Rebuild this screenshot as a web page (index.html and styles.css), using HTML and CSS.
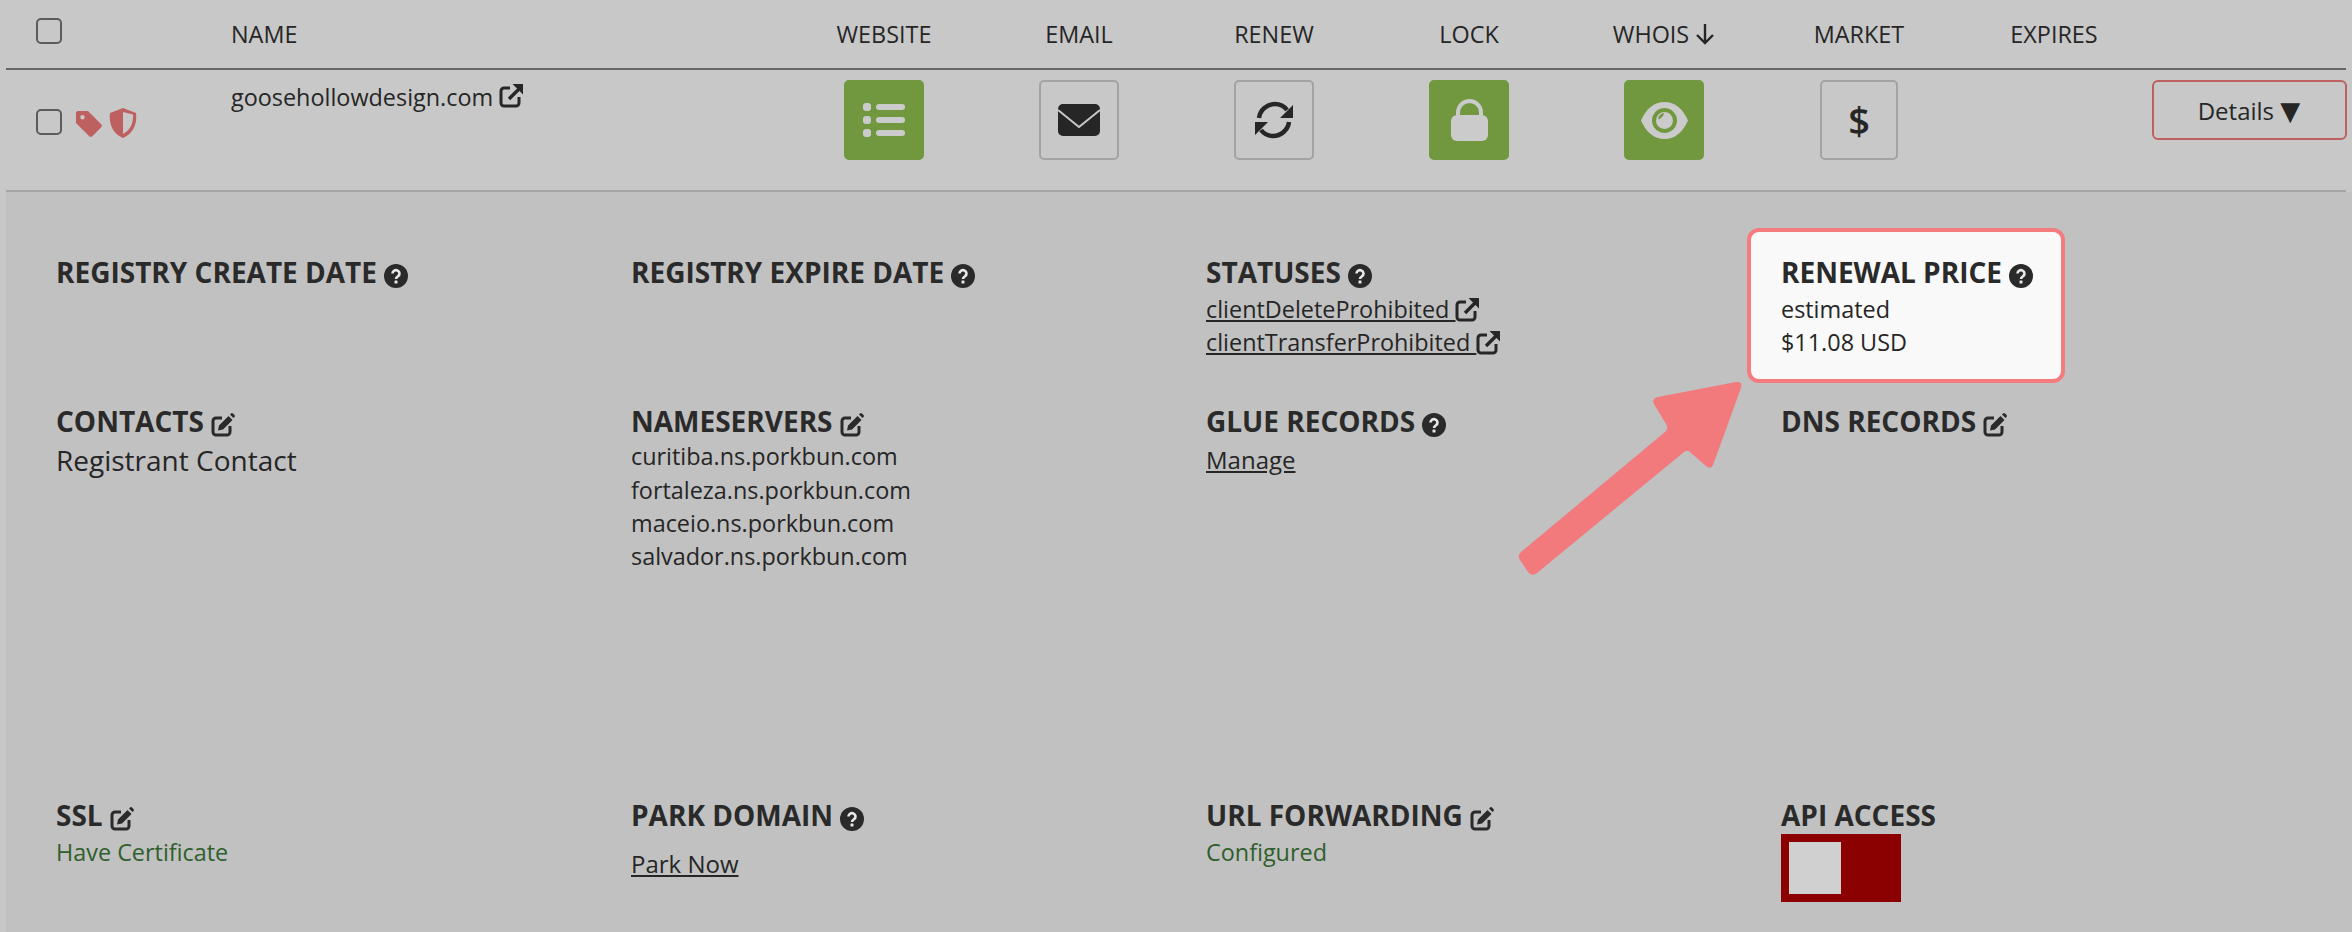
FILE: index.html
```html
<!DOCTYPE html>
<html lang="en">
<head>
    <meta charset="UTF-8">
    <meta name="viewport" content="width=device-width, initial-scale=1.0">
    <title>Domains</title>
    <link rel="stylesheet" href="styles.css">
</head>
<body>
    <!-- shared icons -->
    <svg class="sprites" width="0" height="0">
        <symbol id="i-ext" viewBox="0 0 24 24">
            <path d="M11 4H5a3 3 0 0 0-3 3v12a3 3 0 0 0 3 3h12a3 3 0 0 0 3-3v-6" fill="none" stroke="currentColor" stroke-width="3"/>
            <path d="M10 15 20 5" fill="none" stroke="currentColor" stroke-width="3.4"/>
            <path d="M13.500 0H24v10.500z" fill="currentColor"/>
        </symbol>
        <symbol id="i-edit" viewBox="0 0 24 24">
            <path d="M11 5H5a3 3 0 0 0-3 3v11a3 3 0 0 0 3 3h11a3 3 0 0 0 3-3v-6" fill="none" stroke="currentColor" stroke-width="3"/>
            <path d="M7 17.500l1-5L17.500 3l4 4-9.500 9.500zM19 1.500l1-1a1.500 1.500 0 0 1 2 0l1.500 1.500a1.500 1.500 0 0 1 0 2l-1 1z" fill="currentColor"/>
        </symbol>
        <symbol id="i-help" viewBox="0 0 24 24">
            <circle cx="12" cy="12" r="12" fill="currentColor"/>
            <path d="M8.500 9.500a3.500 3.300 0 1 1 5.500 2.700c-1.300.9-2 1.400-2 2.800" fill="none" stroke="#e8e8e8" stroke-width="2.600"/>
            <rect x="10.500" y="16.500" width="3" height="3" rx=".6" fill="#e8e8e8"/>
        </symbol>
    </svg>

    <div class="row head-row">
        <div class="cell-check"><span class="check"></span></div>
        <div class="cell-name">NAME</div>
        <div class="col">WEBSITE</div>
        <div class="col">EMAIL</div>
        <div class="col">RENEW</div>
        <div class="col">LOCK</div>
        <div class="col">WHOIS
            <svg class="sort" viewBox="0 0 20 22"><path d="M10 1v19M2 12l8 8 8-8" fill="none" stroke="currentColor" stroke-width="2.400"/></svg>
        </div>
        <div class="col">MARKET</div>
        <div class="col">EXPIRES</div>
        <div></div>
    </div>

    <div class="row domain-row">
        <div class="cell-check status-cell">
            <span class="check"></span>
            <svg class="tag" viewBox="0 0 26 26"><path fill-rule="evenodd" d="M2 0h10l13 13a2.500 2.500 0 0 1 0 3.500L16.500 25a2.500 2.500 0 0 1-3.500 0L0 12V2a2 2 0 0 1 2-2zm4.500 4a2.200 2.200 0 1 0 0 4.400 2.200 2.200 0 0 0 0-4.400z"/></svg>
            <svg class="shield" viewBox="0 0 28 30"><path fill-rule="evenodd" d="M14 0 1 5c-1.200 10 2 20 13 25 11-5 14.200-15 13-25zm0 4v22c7.500-4 10.500-10.500 10-19.500z"/></svg>
        </div>
        <div class="cell-name domain-name">goosehollowdesign.com <svg class="ico ico-ext name-ext"><use href="#i-ext"/></svg></div>
        <div class="col"><span class="tile on">
            <svg width="42" height="34" viewBox="0 0 42 34"><g fill="currentColor"><rect y="0" width="8" height="8" rx="3"/><rect y="13" width="8" height="8" rx="3"/><rect y="26" width="8" height="8" rx="3"/><rect x="13" y="1" width="29" height="6" rx="3"/><rect x="13" y="14" width="29" height="6" rx="3"/><rect x="13" y="27" width="29" height="6" rx="3"/></g></svg>
        </span></div>
        <div class="col"><span class="tile">
            <svg width="42" height="32" viewBox="0 0 42 32"><rect width="42" height="32" rx="5" fill="currentColor"/><path d="M0 6l21 17L42 6" fill="none" stroke="#c8c8c8" stroke-width="2"/></svg>
        </span></div>
        <div class="col"><span class="tile">
            <svg width="40" height="38" viewBox="0 0 40 38"><g fill="none" stroke="currentColor" stroke-width="4.500"><path d="M5 17C6 9 13 3 21 3c5 0 9 2 12 6"/><path d="M35 21c-1 8-8 14-16 14-5 0-9-2-12-6"/></g><path d="M39 4v13H26zM1 34V21h13z" fill="currentColor"/></svg>
        </span></div>
        <div class="col"><span class="tile on">
            <svg width="37" height="42" viewBox="0 0 37 42"><path d="M7 20v-6.500a11.500 11.500 0 0 1 23 0V20" fill="none" stroke="currentColor" stroke-width="4"/><rect y="16" width="37" height="26" rx="6" fill="currentColor"/></svg>
        </span></div>
        <div class="col"><span class="tile on">
            <svg width="47" height="37" viewBox="0 0 47 37"><path d="M0 18.500C5 7 13 0 23.500 0S42 7 47 18.500C42 30 34 37 23.500 37S5 30 0 18.500z" fill="currentColor"/><circle cx="23.500" cy="18.500" r="12.500" fill="#71983f"/><circle cx="23.500" cy="18.500" r="8.500" fill="currentColor"/><path d="M23 11a7.500 7.500 0 0 0-6 6.500c2-.5 5.500-3 6-6.500z" fill="#71983f"/></svg>
        </span></div>
        <div class="col"><span class="tile dollar">$</span></div>
        <div class="col"></div>
        <div class="details-cell"><button class="btn-details">Details <span class="caret">▼</span></button></div>
    </div>

    <div class="panel">
        <div class="field">
            <h3>REGISTRY CREATE DATE <svg class="ico"><use href="#i-help"/></svg></h3>
        </div>
        <div class="field">
            <h3>REGISTRY EXPIRE DATE <svg class="ico"><use href="#i-help"/></svg></h3>
        </div>
        <div class="field">
            <h3>STATUSES <svg class="ico"><use href="#i-help"/></svg></h3>
            <div class="lines">
                <div class="line"><a href="#">clientDeleteProhibited <svg class="ico ico-ext"><use href="#i-ext"/></svg></a></div>
                <div class="line"><a href="#">clientTransferProhibited <svg class="ico ico-ext"><use href="#i-ext"/></svg></a></div>
            </div>
        </div>
        <div class="field highlight">
            <h3>RENEWAL PRICE <svg class="ico"><use href="#i-help"/></svg></h3>
            <div class="lines">
                <div class="line">estimated</div>
                <div class="line">$11.08 USD</div>
            </div>
        </div>

        <div class="field">
            <h3>CONTACTS <svg class="ico"><use href="#i-edit"/></svg></h3>
            <div class="big">Registrant Contact</div>
        </div>
        <div class="field">
            <h3>NAMESERVERS <svg class="ico"><use href="#i-edit"/></svg></h3>
            <div class="line">curitiba.ns.porkbun.com</div>
            <div class="line">fortaleza.ns.porkbun.com</div>
            <div class="line">maceio.ns.porkbun.com</div>
            <div class="line">salvador.ns.porkbun.com</div>
        </div>
        <div class="field">
            <h3>GLUE RECORDS <svg class="ico"><use href="#i-help"/></svg></h3>
            <div class="line glue"><a href="#">Manage</a></div>
        </div>
        <div class="field">
            <h3>DNS RECORDS <svg class="ico"><use href="#i-edit"/></svg></h3>
        </div>

        <div class="field">
            <h3>SSL <svg class="ico"><use href="#i-edit"/></svg></h3>
            <div class="lines good">Have Certificate</div>
        </div>
        <div class="field">
            <h3>PARK DOMAIN <svg class="ico"><use href="#i-help"/></svg></h3>
            <div class="line park"><a href="#">Park Now</a></div>
        </div>
        <div class="field">
            <h3>URL FORWARDING <svg class="ico"><use href="#i-edit"/></svg></h3>
            <div class="lines good">Configured</div>
        </div>
        <div class="field">
            <h3>API ACCESS</h3>
            <div class="toggle"><span class="knob"></span></div>
        </div>
    </div>

    <!-- annotation arrow over the page -->
    <svg class="arrow" viewBox="1510 375 240 210">
        <path d="M1736 382 1658 397Q1651 399 1654 404L1666 424Q1669 428 1665 432L1521 552Q1517 556 1520 560L1528 572Q1532 577 1537 573L1684 452Q1688 449 1691 453L1706 466Q1711 470 1713 465L1741 388Q1743 381 1736 382Z" fill="#f27a7c"/>
    </svg>
</body>
</html>
```

FILE: styles.css
```css
* {
    margin: 0;
    padding: 0;
    box-sizing: border-box;
}

html, body {
    height: 932px;
    overflow: hidden;
}

body {
    position: relative;
    background: #c8c8c8;
    padding-left: 6px;
    color: #262626;
    font-family: "Open Sans", sans-serif;
    font-size: 23.400px;
}

.sprites {
    position: absolute;
}

.row {
    display: grid;
    grid-template-columns: 225px 555.500px repeat(7, 195px) 1fr;
    width: 2340px;
}

.head-row {
    height: 70px;
    border-bottom: 2px solid #666;
    align-items: center;
}

.domain-row {
    height: 122px;
    border-bottom: 2px solid #a5a5a5;
    padding-top: 10px;
    align-items: start;
}

.cell-check {
    padding-left: 30px;
    display: flex;
    align-items: center;
}

.head-row .cell-check {
    margin-top: -6px;
}

.status-cell {
    padding-top: 25px;
}

.check {
    display: block;
    width: 26px;
    height: 26px;
    border: 2px solid #5c5c5c;
    border-radius: 5px;
}

.tag {
    width: 26px;
    height: 26px;
    margin-left: 14px;
    margin-top: 5px;
    fill: #bf6060;
}

.shield {
    width: 28px;
    height: 30px;
    margin-left: 7px;
    margin-top: 3px;
    fill: #bf6060;
}

.domain-name {
    padding-top: 1px;
    line-height: 32px;
}

.col {
    display: flex;
    justify-content: center;
    align-items: center;
    gap: 6px;
}

.sort {
    width: 20px;
    height: 22px;
}

.tile {
    display: flex;
    align-items: center;
    justify-content: center;
    width: 80px;
    height: 80px;
    border: 2px solid #a3a3a3;
    border-radius: 5px;
}

.tile.on {
    background: #71983f;
    border-color: #71983f;
    color: #cbcbcb;
}

.tile.dollar {
    width: 78px;
    font-size: 38px;
    font-weight: 600;
}

.details-cell {
    display: flex;
    justify-content: flex-end;
    padding-right: 1px;
}

.btn-details {
    display: block;
    flex: none;
    width: 195px;
    height: 60px;
    background: none;
    border: 2px solid #bf6060;
    border-radius: 6px;
    color: inherit;
    font-family: inherit;
    font-size: 24px;
}

.caret {
    font-family: "DejaVu Sans", sans-serif;
    font-size: 26px;
}

.panel {
    display: grid;
    grid-template-columns: repeat(4, 575px);
    grid-template-rows: 149px 394px 1fr;
    height: 740px;
    padding: 60.750px 0 0 50px;
    background: #c1c1c1;
}

.field h3 {
    font-size: 28px;
    line-height: 38.500px;
    font-weight: 700;
    color: #2a2a2a;
}

.ico {
    display: inline-block;
    width: 24px;
    height: 24px;
    vertical-align: -5px;
}

.ico-ext {
    vertical-align: -4px;
}

.name-ext {
    vertical-align: -2px;
}

.line {
    line-height: 33.300px;
}

.lines {
    padding-top: 1.500px;
    line-height: 33.300px;
}

.glue {
    margin-top: 3px;
    font-size: 24px;
}

.park {
    margin-top: 13px;
    font-size: 24px;
}

.big {
    font-size: 28px;
    line-height: 40px;
}

.good {
    color: #2f5f2c;
}

a {
    color: inherit;
}

.highlight {
    align-self: start;
    width: 318px;
    margin: -24.750px 0 0 -34px;
    padding: 20.750px 0 19.500px 30px;
    background: #f9f9f9;
    border: 4px solid #f47c7e;
    border-radius: 12px;
}

.toggle {
    width: 120px;
    height: 68px;
    margin-top: -0.250px;
    padding: 8px;
    background: #8b0000;
}

.knob {
    display: block;
    width: 52px;
    height: 52px;
    background: #d0d0d0;
}

.arrow {
    position: absolute;
    left: 1510px;
    top: 375px;
    width: 240px;
    height: 210px;
}
```
